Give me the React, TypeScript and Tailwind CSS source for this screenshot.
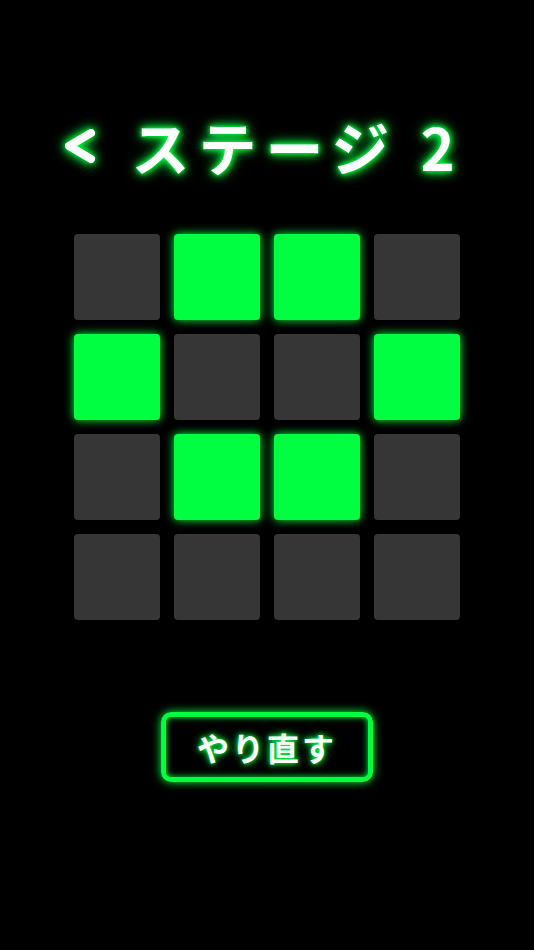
const cells = [
  0, 1, 1, 0,
  1, 0, 0, 1,
  0, 1, 1, 0,
  0, 0, 0, 0,
]

export default function App() {
  return (
    <div
      className="w-[534px] h-[950px] bg-black flex flex-col items-center"
      style={{ fontFamily: '"Noto Sans CJK JP", "Noto Sans", sans-serif' }}
    >
      {/* header */}
      <div className="mt-[114px] h-[64px] flex items-center gap-[34px] text-white">
        <svg
          width="36"
          height="44"
          viewBox="0 0 36 44"
          className="[filter:drop-shadow(0_0_3px_#00ff40)_drop-shadow(0_0_6px_#00ff40)]"
        >
          <polyline
            points="30,9 8,22 30,35"
            fill="none"
            stroke="#ffffff"
            strokeWidth="8"
            strokeLinecap="round"
            strokeLinejoin="round"
          />
        </svg>
        <h1 className="mr-[9px] text-[58px] leading-none font-bold tracking-[9px] [text-shadow:0_0_4px_#00ff40,0_0_8px_#00ff40,0_0_14px_#00ff40]">
          ステージ 2
        </h1>
      </div>

      {/* board */}
      <div className="mt-[56px] grid grid-cols-4 gap-[14px]">
        {cells.map((on, i) => (
          <div
            key={i}
            className={
              on
                ? "w-[86px] h-[86px] rounded-[4px] bg-[#00ff40] shadow-[0_0_10px_#00ff40]"
                : "w-[86px] h-[86px] rounded-[4px] bg-[#363636]"
            }
          />
        ))}
      </div>

      {/* retry */}
      <button className="mt-[92px] w-[212px] h-[70px] rounded-[10px] border-[5px] border-[#00ff40] shadow-[0_0_10px_#00ff40,inset_0_0_6px_#00ff40] flex items-center justify-center text-white text-[32px] font-bold tracking-[3px] [text-shadow:0_0_4px_#00ff40,0_0_8px_#00ff40]">
        やり直す
      </button>
    </div>
  )
}
